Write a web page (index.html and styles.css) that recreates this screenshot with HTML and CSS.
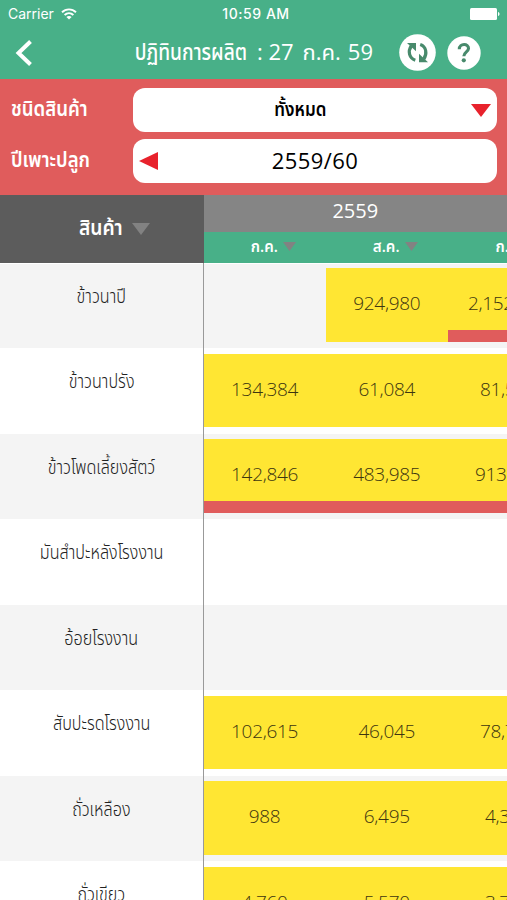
FILE: index.html
```html
<!DOCTYPE html>
<html lang="th">
  <head>
    <meta charset="utf-8">
    <title>ปฏิทินการผลิต</title>
    <meta name="viewport" content="width=device-width, initial-scale=1">
    <link rel="stylesheet" href="styles.css">
  </head>
  <body>
    <header>
      <div class="status">
        <div class="carrier">
          <span>Carrier</span>
          <svg width="16" height="12" viewBox="0 0 16 12" fill="none" stroke="#fff" stroke-width="1.9">
            <path d="M1 4.3C5 .4 11 .4 15 4.3M3.6 7C6.2 4.5 9.8 4.5 12.4 7" />
            <path d="M8 11.5L5.4 8.9C6.9 7.6 9.1 7.6 10.6 8.9Z" fill="#fff" stroke="none" />
          </svg>
        </div>
        <div class="clock">10:59 AM</div>
        <svg class="battery" width="30" height="12" viewBox="0 0 30 12" fill="#fff">
          <rect width="27" height="12" rx="1.5" />
          <path d="M28 4C30 4.5 30 7.5 28 8Z" />
        </svg>
      </div>
      <nav>
        <svg class="back" width="18" height="26" viewBox="0 0 18 26" fill="none" stroke="#fff" stroke-width="4">
          <path d="M15.5 1.5L3.5 13L15.5 24.5" />
        </svg>
        <h1><span class="word-title">ปฏิทินการผลิต</span><span class="day">: 27</span><span>ก.ค.</span><span>59</span></h1>
        <svg class="refresh" width="37" height="37" viewBox="0 0 37 37">
          <circle cx="18.5" cy="18.5" r="18.3" fill="#fff" />
          <g fill="none" stroke="#488a6c" stroke-width="3.2">
            <path d="M16.3 26.2C10.2 24.2 8.6 17.5 12.2 12" />
            <path d="M21.2 10.6C27.3 12.6 28.4 19.5 24.8 25" />
          </g>
          <path d="M8 8.9H17V17.2Z" fill="#488a6c" />
          <path d="M29 28.3H20V19.8Z" fill="#488a6c" />
        </svg>
        <svg class="help" width="34" height="34" viewBox="0 0 34 34">
          <circle cx="17" cy="17" r="16.7" fill="#fff" />
          <path d="M12.3 13.2C12.3 7 22 7.2 21.5 12.7C21.2 15.9 17 16 16.8 20.2" fill="none" stroke="#488a6c" stroke-width="3.1" />
          <circle cx="16.8" cy="24.3" r="2.1" fill="#488a6c" />
        </svg>
      </nav>
    </header>

    <section class="filters">
      <div class="filter">
        <label><span class="word">ชนิดสินค้า</span></label>
        <div class="field">
          <span class="value all">ทั้งหมด</span>
          <svg class="down" width="20" height="13" viewBox="0 0 20 13"><path d="M0 0H20L10 13Z" fill="#e8222c" /></svg>
        </div>
      </div>
      <div class="filter">
        <label><span class="word">ปีเพาะปลูก</span></label>
        <div class="field">
          <svg class="prev" width="19" height="18" viewBox="0 0 19 18"><path d="M19 0V18L0 9Z" fill="#e8222c" /></svg>
          <span class="value year">2559/60</span>
        </div>
      </div>
    </section>

    <main>
      <div class="thead">
        <div class="corner">
          <span>สินค้า</span>
          <svg width="18" height="12" viewBox="0 0 18 12"><path d="M0 0H18L9 12Z" fill="#828282" /></svg>
        </div>
        <div class="period">
          <div class="period-year">2559</div>
          <div class="months">
            <div class="month"><span>ก.ค.</span><svg width="13" height="9" viewBox="0 0 13 9"><path d="M0 0H13L6.5 9Z" fill="#828282" /></svg></div>
            <div class="month"><span>ส.ค.</span><svg width="13" height="9" viewBox="0 0 13 9"><path d="M0 0H13L6.5 9Z" fill="#828282" /></svg></div>
            <div class="month cut"><span>ก.</span></div>
          </div>
        </div>
      </div>

      <div class="row">
        <div class="name"><span>ข้าวนาปี</span></div>
        <div class="cells"><div class="cell"></div><div class="cell has">924,980</div><div class="cell has peak cut million">2,152</div></div>
      </div>
      <div class="row">
        <div class="name"><span>ข้าวนาปรัง</span></div>
        <div class="cells"><div class="cell has">134,384</div><div class="cell has">61,084</div><div class="cell has cut tens">81,5</div></div>
      </div>
      <div class="row">
        <div class="name"><span>ข้าวโพดเลี้ยงสัตว์</span></div>
        <div class="cells"><div class="cell has peak">142,846</div><div class="cell has peak">483,985</div><div class="cell has peak cut hundreds">913</div></div>
      </div>
      <div class="row">
        <div class="name"><span>มันสำปะหลังโรงงาน</span></div>
        <div class="cells"></div>
      </div>
      <div class="row">
        <div class="name"><span>อ้อยโรงงาน</span></div>
        <div class="cells"></div>
      </div>
      <div class="row">
        <div class="name"><span>สับปะรดโรงงาน</span></div>
        <div class="cells"><div class="cell has">102,615</div><div class="cell has">46,045</div><div class="cell has cut tens">78,7</div></div>
      </div>
      <div class="row">
        <div class="name"><span>ถั่วเหลือง</span></div>
        <div class="cells"><div class="cell has">988</div><div class="cell has">6,495</div><div class="cell has cut ones">4,3</div></div>
      </div>
      <div class="row">
        <div class="name"><span>ถั่วเขียว</span></div>
        <div class="cells"><div class="cell has">4,760</div><div class="cell has">5,570</div><div class="cell has cut ones">3,7</div></div>
      </div>
    </main>
  </body>
</html>
```

FILE: styles.css
```css
* {
  box-sizing: border-box;
}
body {
  margin: 0;
  width: 507px;
  height: 900px;
  overflow: hidden;
  display: flex;
  flex-direction: column;
  background: #fff;
  font-family: "Open Sans", "Noto Sans Thai", "Noto Sans", sans-serif;
}
svg {
  display: block;
  flex: none;
}
header {
  flex: none;
  height: 79px;
  background: #48b088;
  color: #fff;
}
.status {
  height: 27px;
  padding: 0 7px 0 8px;
  display: grid;
  grid-template-columns: 1fr auto 1fr;
  align-items: center;
  font-family: Inter, sans-serif;
  font-size: 14px;
}
.carrier {
  display: flex;
  align-items: center;
  gap: 7px;
}
.clock {
  padding-left: 4px;
  font-weight: 500;
  font-size: 14px;
  letter-spacing: .55px;
}
.battery {
  justify-self: end;
}
nav {
  height: 51px;
  padding: 0 26px 0 15px;
  display: flex;
  align-items: center;
}
h1 {
  flex: 1;
  margin: 0 26px 4px 0;
  display: flex;
  justify-content: flex-end;
  gap: 7px;
  font-size: 22px;
  font-weight: 400;
  line-height: 40px;
  white-space: nowrap;
}
/* Thai words are set slightly condensed */
.word-title {
  transform: scale(.87, 1.05);
  transform-origin: right;
  margin-right: 3px;
  font-weight: 500;
}
.day {
  margin-right: 2px;
}
.help {
  margin-left: 11px;
}

.filters {
  flex: none;
  height: 116px;
  padding: 9px 10px 0 11px;
  display: flex;
  flex-direction: column;
  gap: 7px;
  background: #e05c5c;
}
.filter {
  display: flex;
}
label {
  width: 122px;
  line-height: 42px;
  font-size: 20px;
  font-weight: 600;
  color: #fff;
  white-space: nowrap;
}
.word {
  display: inline-block;
  transform: scale(.93, 1.07);
  transform-origin: left;
}
.field {
  flex: 1;
  height: 44px;
  padding: 0 6px;
  display: flex;
  align-items: center;
  border-radius: 12px;
  background: #fff;
  font-size: 20px;
  line-height: 42px;
  color: #000;
}
.value {
  flex: 1;
  text-align: center;
}
.all {
  font-weight: 600;
  transform: scaleX(.85);
  padding: 0 11px 2px 0;
}
.year {
  font-size: 22px;
  letter-spacing: .4px;
  padding: 0 19px 3px 0;
}

main {
  flex: 1;
  min-height: 0;
  overflow: hidden;
}
.thead {
  height: 67.5px;
  display: flex;
  color: #fff;
}
.corner {
  flex: none;
  width: 203.5px;
  padding-left: 24px;
  display: flex;
  align-items: center;
  justify-content: center;
  gap: 8px;
  background: #5c5c5c;
  font-size: 20px;
  font-weight: 600;
}
.corner span {
  transform: scale(.96, 1.07);
}
.period {
  flex: 1;
  min-width: 0;
}
.period-year {
  height: 37px;
  line-height: 32px;
  background: #858585;
  text-align: center;
  font-size: 20px;
}
.months {
  height: 30.5px;
  display: flex;
  background: #48b088;
  overflow: hidden;
}
.month {
  flex: none;
  width: 122.2px;
  padding: 0 0 1px 17px;
  display: flex;
  align-items: center;
  justify-content: center;
  gap: 5px;
  font-size: 16px;
  font-weight: 600;
  line-height: 29px;
}
.month span {
  transform: scaleX(.94);
}
.month.cut {
  justify-content: flex-start;
  padding-left: 47px;
}

.row {
  height: 85.5px;
  display: flex;
}
.row:nth-child(even) {
  background: #f4f4f4;
}
.row:nth-child(2) {
  box-shadow: inset 0 1px #fff;
}
.name {
  flex: none;
  width: 203.5px;
  border-right: 1.5px solid #999;
  text-align: center;
  font-size: 18.5px;
  font-weight: 300;
  line-height: 64px;
  color: #222;
  white-space: nowrap;
}
.name span {
  display: inline-block;
  transform: scale(.875, 1.08);
}
.cells {
  flex: 1;
  min-width: 0;
  display: flex;
  overflow: hidden;
  padding: 5.5px 0 6.5px;
}
.cell {
  flex: none;
  width: 122.2px;
  text-align: center;
  font-size: 19px;
  font-weight: 300;
  line-height: 70px;
  letter-spacing: -.3px;
  color: #3d3510;
}
.has {
  background: #ffe633;
}
.peak {
  border-bottom: 12px solid #e05c5c;
}
.cell.cut {
  text-align: left;
}
.million {
  padding-left: 20px;
}
.hundreds {
  padding-left: 27px;
}
.tens {
  padding-left: 32px;
}
.ones {
  padding-left: 37px;
}
```
